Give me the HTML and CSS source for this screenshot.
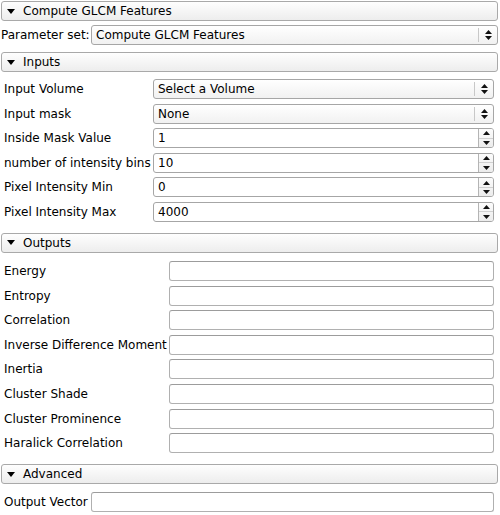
FILE: index.html
```html
<!DOCTYPE html>
<html>
<head>
<meta charset="utf-8">
<link rel="stylesheet" href="styles.css">
</head>
<body>
<div class="page">
  <div class="collapse first">
    <svg class="tri" width="8" height="5" viewBox="0 0 8 5"><polygon points="0,0 8,0 4,5"/></svg>
    <span>Compute GLCM Features</span>
  </div>

  <div class="param-row">
    <span class="param-label">Parameter set:</span>
    <div class="combo wide">
      <span class="val">Compute GLCM Features</span>
      <span class="combo-btn"><svg width="7" height="10" viewBox="0 0 7 10"><polygon points="0,4 3.5,0 7,4"/><polygon points="0,6 7,6 3.5,10"/></svg></span>
    </div>
  </div>

  <div class="collapse sec">
    <svg class="tri" width="8" height="5" viewBox="0 0 8 5"><polygon points="0,0 8,0 4,5"/></svg>
    <span>Inputs</span>
  </div>
  <div class="form inputs">
    <span class="lbl">Input Volume</span>
    <div class="combo">
      <span class="val">Select a Volume</span>
      <span class="combo-btn"><svg width="7" height="10" viewBox="0 0 7 10"><polygon points="0,4 3.5,0 7,4"/><polygon points="0,6 7,6 3.5,10"/></svg></span>
    </div>
    <span class="lbl">Input mask</span>
    <div class="combo">
      <span class="val">None</span>
      <span class="combo-btn"><svg width="7" height="10" viewBox="0 0 7 10"><polygon points="0,4 3.5,0 7,4"/><polygon points="0,6 7,6 3.5,10"/></svg></span>
    </div>
    <span class="lbl">Inside Mask Value</span>
    <div class="spin">
      <span class="val">1</span>
      <span class="spin-btns"><span class="sb"><svg width="7" height="4" viewBox="0 0 7 4"><polygon points="0,4 3.5,0 7,4"/></svg></span><span class="sb"><svg width="7" height="4" viewBox="0 0 7 4"><polygon points="0,0 7,0 3.5,4"/></svg></span></span>
    </div>
    <span class="lbl">number of intensity bins</span>
    <div class="spin">
      <span class="val">10</span>
      <span class="spin-btns"><span class="sb"><svg width="7" height="4" viewBox="0 0 7 4"><polygon points="0,4 3.5,0 7,4"/></svg></span><span class="sb"><svg width="7" height="4" viewBox="0 0 7 4"><polygon points="0,0 7,0 3.5,4"/></svg></span></span>
    </div>
    <span class="lbl">Pixel Intensity Min</span>
    <div class="spin">
      <span class="val">0</span>
      <span class="spin-btns"><span class="sb"><svg width="7" height="4" viewBox="0 0 7 4"><polygon points="0,4 3.5,0 7,4"/></svg></span><span class="sb"><svg width="7" height="4" viewBox="0 0 7 4"><polygon points="0,0 7,0 3.5,4"/></svg></span></span>
    </div>
    <span class="lbl">Pixel Intensity Max</span>
    <div class="spin">
      <span class="val">4000</span>
      <span class="spin-btns"><span class="sb"><svg width="7" height="4" viewBox="0 0 7 4"><polygon points="0,4 3.5,0 7,4"/></svg></span><span class="sb"><svg width="7" height="4" viewBox="0 0 7 4"><polygon points="0,0 7,0 3.5,4"/></svg></span></span>
    </div>
  </div>

  <div class="collapse sec">
    <svg class="tri" width="8" height="5" viewBox="0 0 8 5"><polygon points="0,0 8,0 4,5"/></svg>
    <span>Outputs</span>
  </div>
  <div class="form outputs">
    <span class="lbl">Energy</span><div class="edit"></div>
    <span class="lbl">Entropy</span><div class="edit"></div>
    <span class="lbl">Correlation</span><div class="edit"></div>
    <span class="lbl">Inverse Difference Moment</span><div class="edit"></div>
    <span class="lbl">Inertia</span><div class="edit"></div>
    <span class="lbl">Cluster Shade</span><div class="edit"></div>
    <span class="lbl">Cluster Prominence</span><div class="edit"></div>
    <span class="lbl">Haralick Correlation</span><div class="edit"></div>
  </div>

  <div class="collapse sec">
    <svg class="tri" width="8" height="5" viewBox="0 0 8 5"><polygon points="0,0 8,0 4,5"/></svg>
    <span>Advanced</span>
  </div>
  <div class="form advanced">
    <span class="lbl">Output Vector</span><div class="edit"></div>
  </div>
</div>
</body>
</html>
```

FILE: styles.css
```css
html, body {
  margin: 0;
  padding: 0;
  background: #ffffff;
}
body {
  font-family: "DejaVu Sans", "Liberation Sans", sans-serif;
  font-size: 12px;
  color: #000000;
}
.page {
  width: 500px;
  padding-top: 1px;
}
.collapse {
  box-sizing: border-box;
  height: 20px;
  margin: 0 2px 0 1px;
  border: 1px solid #a9a9a9;
  border-radius: 3px;
  background: linear-gradient(#fefefe, #ededed);
  display: flex;
  align-items: center;
  padding-left: 5px;
  gap: 8px;
}
.collapse .tri {
  fill: #000;
  flex: none;
}
.collapse.sec {
  margin-top: 7px;
}
.param-row {
  display: flex;
  align-items: center;
  height: 20px;
  margin: 4px 2px 0 1px;
}
.param-label {
  width: 90px;
  flex: none;
}
.combo {
  box-sizing: border-box;
  height: 20px;
  border: 1px solid #a6a6a6;
  border-radius: 3px;
  background: linear-gradient(#ffffff, #f1f1f1);
  display: flex;
  align-items: center;
}
.combo.wide {
  flex: 1;
}
.val {
  flex: 1;
  padding-left: 4px;
  white-space: nowrap;
}
.combo-btn {
  flex: none;
  width: 18px;
  height: 14px;
  border-left: 1px solid #c8c8c8;
  display: flex;
  align-items: center;
  justify-content: center;
}
.combo-btn svg, .sb svg {
  fill: #111;
}
.form {
  display: grid;
  grid-auto-rows: 20px;
  row-gap: 4.6px;
  align-items: center;
  padding: 7px 6px 0 4px;
}
.inputs {
  grid-template-columns: 149px 1fr;
}
.outputs {
  grid-template-columns: 165px 1fr;
  padding-top: 8px;
}
.advanced {
  grid-template-columns: 87px 1fr;
  padding-top: 8px;
}
.form + .collapse.sec {
  margin-top: 11px;
}
.lbl {
  white-space: nowrap;
}
.spin {
  box-sizing: border-box;
  height: 20px;
  border: 1px solid #a6a6a6;
  border-radius: 3px;
  background: #ffffff;
  display: flex;
  align-items: center;
}
.spin-btns {
  flex: none;
  width: 14px;
  height: 18px;
  border-left: 1px solid #b4b4b4;
  display: flex;
  flex-direction: column;
  background: linear-gradient(#fcfcfc, #ececec);
  border-radius: 0 2px 2px 0;
}
.sb {
  flex: 1;
  display: flex;
  align-items: center;
  justify-content: center;
}
.sb + .sb {
  border-top: 1px solid #d0d0d0;
}
.edit {
  box-sizing: border-box;
  height: 20px;
  border: 1px solid #b0b0b0;
  border-top-color: #9c9c9c;
  border-radius: 3px;
  background: #ffffff;
}
```
